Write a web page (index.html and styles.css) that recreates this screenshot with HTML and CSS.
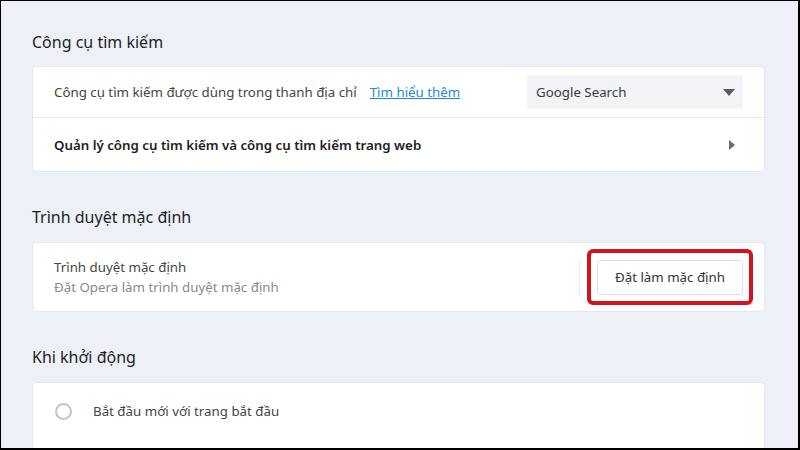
FILE: index.html
```html
<!DOCTYPE html>
<html lang="vi">
<head>
<meta charset="utf-8">
<link rel="stylesheet" href="styles.css">
</head>
<body>
<div class="frame">
  <section class="section">
    <h2 class="section-title">Công cụ tìm kiếm</h2>
    <div class="card">
      <div class="row row-search">
        <div class="row-label">
          <span>Công cụ tìm kiếm được dùng trong thanh địa chỉ</span>
          <a class="link" href="#">Tìm hiểu thêm</a>
        </div>
        <div class="select">
          <span>Google Search</span>
          <svg class="select-caret" width="12" height="7" viewBox="0 0 12 7"><path d="M0 0H12L6 7Z" fill="#5a5a5a"/></svg>
        </div>
      </div>
      <div class="row row-link">
        <span class="row-strong">Quản lý công cụ tìm kiếm và công cụ tìm kiếm trang web</span>
        <svg class="row-arrow" width="6" height="10" viewBox="0 0 6 10"><path d="M0 0L6 5L0 10Z" fill="#6a6a6a"/></svg>
      </div>
    </div>
  </section>

  <section class="section">
    <h2 class="section-title">Trình duyệt mặc định</h2>
    <div class="card">
      <div class="row row-default">
        <div class="row-text">
          <div class="row-main">Trình duyệt mặc định</div>
          <div class="row-sub">Đặt Opera làm trình duyệt mặc định</div>
        </div>
        <div class="row-action">
          <div class="separator"></div>
          <div class="button-wrap">
            <button class="button">Đặt làm mặc định</button>
            <div class="highlight"></div>
          </div>
        </div>
      </div>
    </div>
  </section>

  <section class="section">
    <h2 class="section-title">Khi khởi động</h2>
    <div class="card card-open">
      <div class="row row-radio">
        <span class="radio"></span>
        <span class="radio-label">Bắt đầu mới với trang bắt đầu</span>
      </div>
    </div>
  </section>
</div>
</body>
</html>
```
FILE: styles.css
```css
* { box-sizing: border-box; }
html, body {
  margin: 0;
  padding: 0;
  width: 800px;
  height: 450px;
  overflow: hidden;
}
body {
  font-family: "Noto Sans", "Open Sans", sans-serif;
  color: #333;
  background: #000;
}
.frame {
  width: 800px;
  height: 450px;
  border-style: solid;
  border-color: #000;
  border-width: 1px 2px 2px 1px;
  background: #edf1f7;
  padding: 29px 33px 0 31px;
  overflow: hidden;
}
.section + .section { margin-top: 33px; }
.section-title {
  margin: 0 0 13px 0;
  font-size: 16px;
  line-height: 24px;
  font-weight: 400;
  color: #1e1e1e;
}
.section:first-child .section-title { margin-bottom: 12px; }
.card {
  background: #fff;
  border: 1px solid #e4e8ee;
  border-radius: 5px;
}
.card-open { height: 80px; border-bottom: none; border-radius: 5px 5px 0 0; }
.row {
  display: flex;
  align-items: center;
  padding: 0 21px;
}
.row-search { height: 51px; border-bottom: 1px solid #e6e8eb; }
.row-label {
  flex: 1;
  font-size: 13.3px;
  color: #454545;
  display: flex;
  gap: 13px;
}
.link { color: #1b8bd0; text-decoration: underline; }
.select {
  width: 216px;
  height: 34px;
  background: #f1f3f6;
  border-radius: 4px;
  display: flex;
  align-items: center;
  justify-content: space-between;
  padding: 0 8px 0 9px;
  font-size: 13.3px;
  color: #3a3a3a;
}
.row-link { height: 53px; justify-content: space-between; padding-right: 29px; }
.row-strong { font-size: 13.3px; font-weight: 600; color: #222; }
.row-default { height: 68px; justify-content: space-between; }
.row-main { font-size: 13.3px; line-height: 20px; color: #454545; }
.row-sub { font-size: 13.3px; line-height: 21px; color: #8a8a8a; }
.row-action { display: flex; align-items: center; gap: 17px; }
.separator { width: 1px; height: 35px; background: #e8eaed; }
.button-wrap { position: relative; }
.button {
  display: block;
  width: 146px;
  height: 35px;
  background: #fff;
  border: 1px solid #dde2e8;
  border-radius: 3px;
  font-family: inherit;
  font-size: 13.3px;
  color: #333;
  padding: 0;
}
.highlight {
  position: absolute;
  top: -11px; bottom: -10px; left: -10px; right: -10px;
  border: 4px solid #d2131b;
  border-radius: 6px;
  pointer-events: none;
}
.row-radio { height: 56px; padding-left: 22px; gap: 21px; }
.radio {
  width: 17px;
  height: 17px;
  border: 2px solid #c4c4c4;
  border-radius: 50%;
}
.radio-label { font-size: 13.3px; color: #454545; }
```
